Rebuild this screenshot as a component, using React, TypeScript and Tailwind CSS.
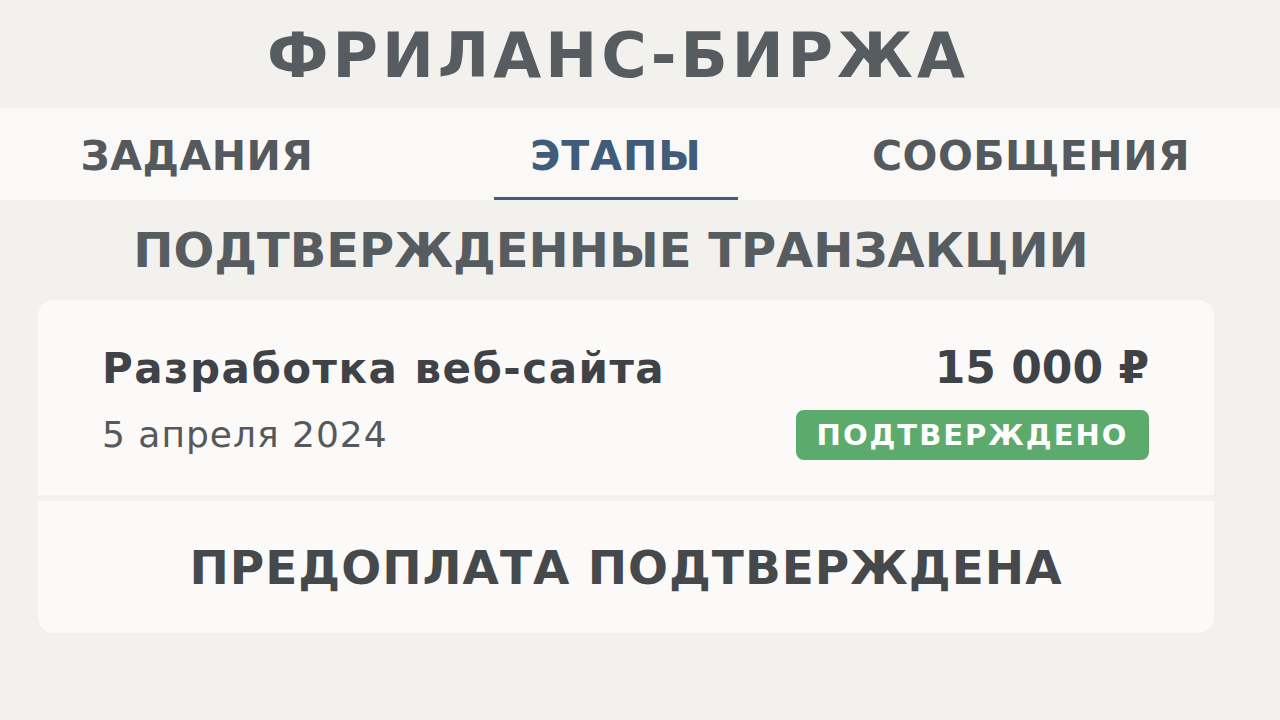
import React from 'react';

const wide = { fontFamily: '"DejaVu Sans", Verdana, sans-serif' };

const tabs = [
  { label: 'ЗАДАНИЯ', active: false },
  { label: 'ЭТАПЫ', active: true },
  { label: 'СООБЩЕНИЯ', active: false },
];

const App = () => {
  return (
    <div className="w-[1280px] h-[720px] bg-[#f3f1ee] overflow-hidden" style={wide}>
      {/* header */}
      <div className="h-[108px] flex items-center justify-center pr-[44px]">
        <h1 className="text-[62px] leading-none font-bold tracking-[4px] text-[#565c60] pt-[4px]">
          ФРИЛАНС-БИРЖА
        </h1>
      </div>

      {/* tabs */}
      <div className="h-[92px] bg-[#faf9f7] grid grid-cols-[394px_444px_386px]">
        {tabs.map((tab) => (
          <div key={tab.label} className="flex justify-center">
            <div
              className={`h-full flex items-center justify-center pt-[5px] ${
                tab.active ? 'w-[244px] border-b-[3px] border-[#3f5d7a] pt-[8px]' : ''
              }`}
            >
              <span
                className={`text-[41px] leading-none font-bold ${
                  tab.active ? 'text-[#3f5d7a] tracking-[1px]' : 'text-[#54595d] tracking-[0.5px]'
                }`}
              >
                {tab.label}
              </span>
            </div>
          </div>
        ))}
      </div>

      {/* section title */}
      <div className="h-[100px] flex items-center justify-center pr-[58px]">
        <h2 className="text-[48px] leading-none font-bold text-[#565c60]">ПОДТВЕРЖДЕННЫЕ ТРАНЗАКЦИИ</h2>
      </div>

      {/* card */}
      <div className="ml-[38px] w-[1176px] flex flex-col gap-[6px]">
        <div className="h-[195px] bg-[#fbfaf8] rounded-t-2xl pl-[64px] pr-[65px] pt-[48px] flex justify-between">
          <div className="flex flex-col">
            <div className="text-[42px] leading-none font-bold tracking-[1.5px] text-[#3f4246]">
              Разработка веб-сайта
            </div>
            <div className="text-[36px] leading-none tracking-[1px] text-[#56595c] mt-[27px]">5 апреля 2024</div>
          </div>
          <div className="flex flex-col items-end -mt-[2px]">
            <div className="text-[44px] leading-none font-bold text-[#3f4246]">15 000 ₽</div>
            <div className="mt-[20px] w-[353px] h-[50px] rounded-lg bg-[#5cab6c] flex items-center justify-center">
              <span className="text-[29px] leading-none font-bold tracking-[2px] text-white">ПОДТВЕРЖДЕНО</span>
            </div>
          </div>
        </div>
        <div className="h-[132px] bg-[#fbfaf8] rounded-b-2xl flex items-center justify-center">
          <span className="text-[47px] leading-none font-bold tracking-[1px] text-[#46494c]">ПРЕДОПЛАТА ПОДТВЕРЖДЕНА</span>
        </div>
      </div>
    </div>
  );
};

export default App;
